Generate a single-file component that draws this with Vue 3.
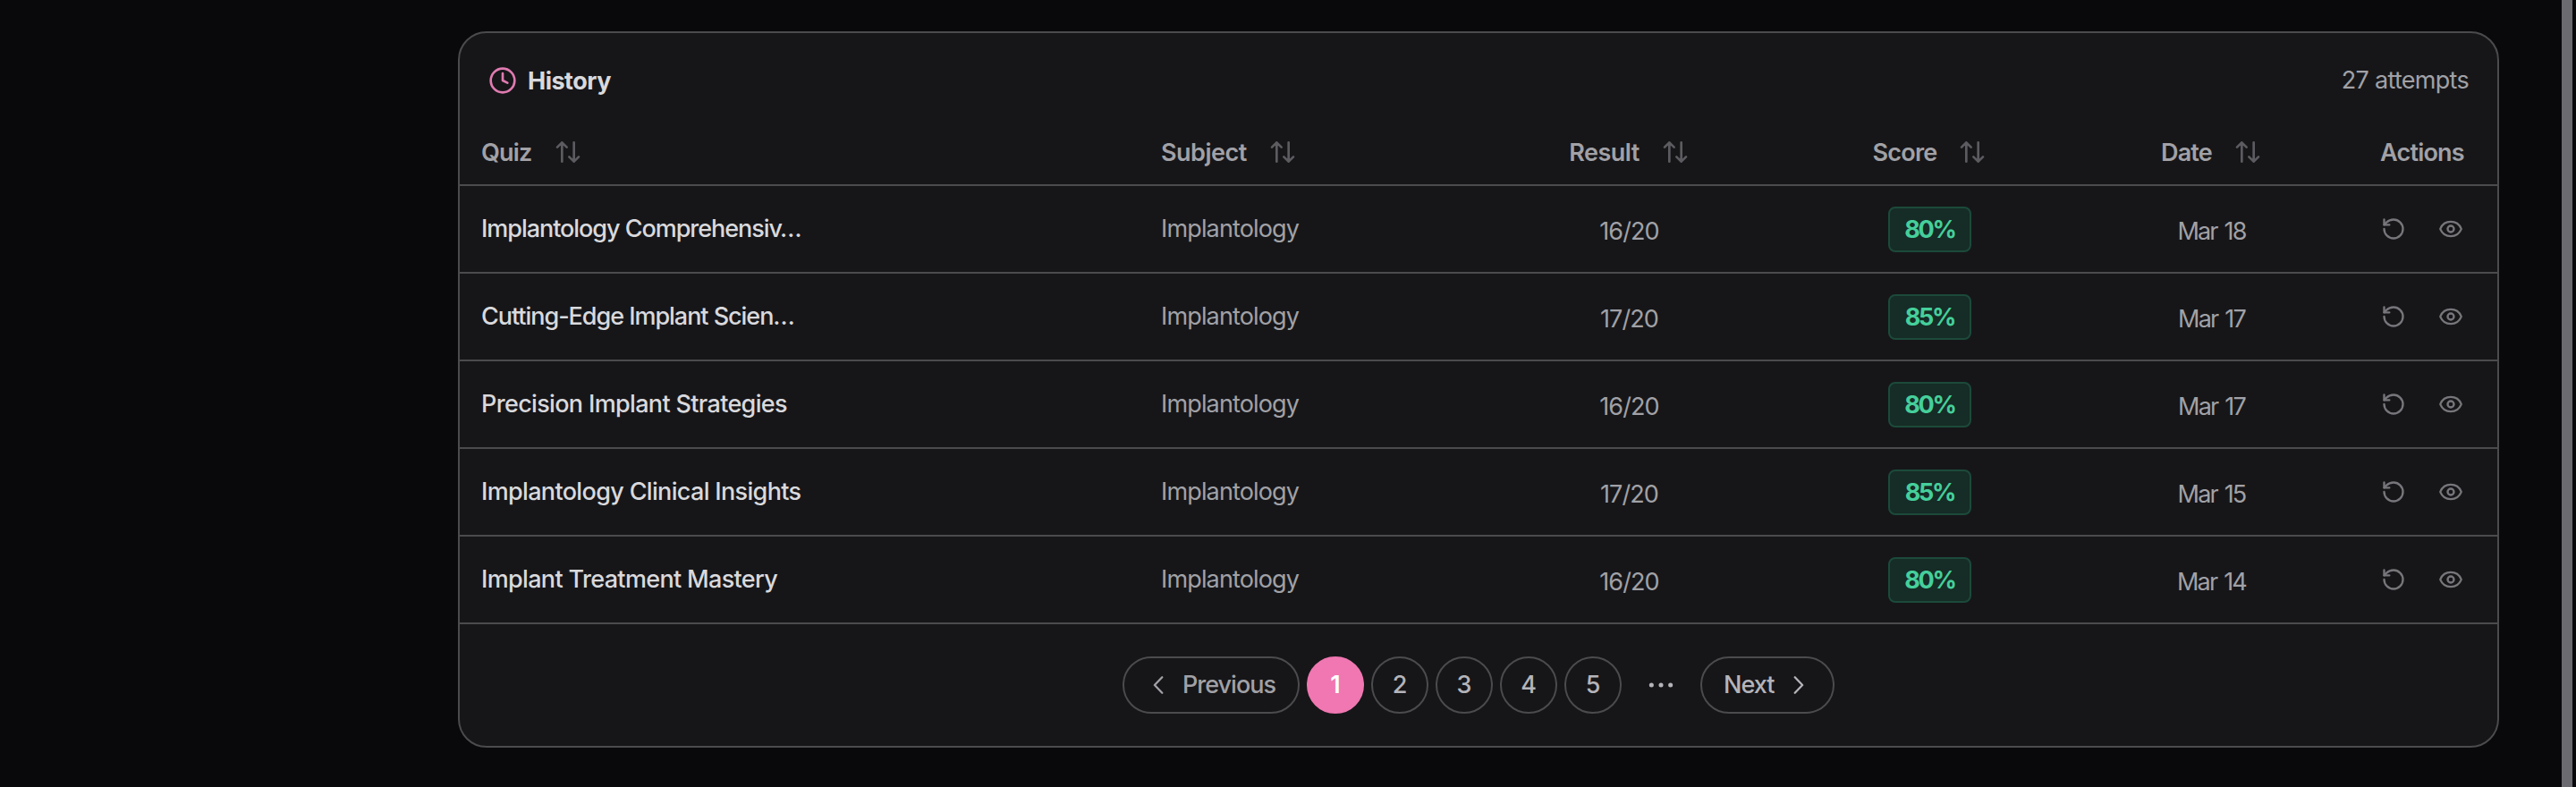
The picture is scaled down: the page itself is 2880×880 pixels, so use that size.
<template>
  <div class="page">
    <section class="card">
      <header class="card-header">
        <h2 class="title">
          <svg class="icon title-icon" viewBox="0 0 24 24">
            <circle cx="12" cy="12" r="10" />
            <path d="M12 6v6l4 2" />
          </svg>
          <span class="title-text">History</span>
        </h2>
        <span class="count">27 attempts</span>
      </header>

      <div class="row head">
        <div
          v-for="c in columns"
          :key="c.id"
          class="cell"
          :class="{ center: c.center }"
        >
          <span class="label" :class="c.id">{{ c.label }}</span>
          <svg v-if="c.sortable" class="icon sort-icon" viewBox="0 0 24 24">
            <path d="m3 8 4-4 4 4M7 4v16M21 16l-4 4-4-4M17 20V4" />
          </svg>
        </div>
      </div>

      <div v-for="(a, i) in attempts" :key="i" class="row">
        <div class="cell">
          <span class="name" :class="{ truncated: a.quiz.endsWith('…') }">{{ a.quiz }}</span>
        </div>
        <div class="cell"><span class="subject-name">{{ a.subject }}</span></div>
        <div class="cell center low"><span class="result-value">{{ a.result }}</span></div>
        <div class="cell center"><span class="badge">{{ a.score }}%</span></div>
        <div class="cell center low"><span class="date-value">{{ a.date }}</span></div>
        <div class="cell center actions">
          <button class="action">
            <svg class="icon" viewBox="0 0 24 24">
              <path d="M3 12a9 9 0 1 0 9-9 9.75 9.75 0 0 0-6.74 2.74L3 8" />
              <path d="M3 3v5h5" />
            </svg>
          </button>
          <button class="action">
            <svg class="icon" viewBox="0 0 24 24">
              <path d="M2.062 12.348a1 1 0 0 1 0-.696 10.75 10.75 0 0 1 19.876 0 1 1 0 0 1 0 .696 10.75 10.75 0 0 1-19.876 0" />
              <circle cx="12" cy="12" r="3" />
            </svg>
          </button>
        </div>
      </div>

      <nav class="pagination">
        <button class="page-btn prev">
          <svg class="icon chevron" viewBox="0 0 24 24"><path d="m15.2 18.6-6.3-6.6 6.3-6.6" /></svg>
          <span>Previous</span>
        </button>
        <button
          v-for="p in pages"
          :key="p"
          class="page-btn number"
          :class="{ active: p === current }"
          @click="current = p"
        >
          {{ p }}
        </button>
        <span class="ellipsis">
          <svg viewBox="0 0 24 24">
            <circle cx="4" cy="12" r="1.9" />
            <circle cx="12" cy="12" r="1.9" />
            <circle cx="20" cy="12" r="1.9" />
          </svg>
        </span>
        <button class="page-btn next">
          <span>Next</span>
          <svg class="icon chevron" viewBox="0 0 24 24"><path d="m8.8 18.6 6.3-6.6-6.3-6.6" /></svg>
        </button>
      </nav>
    </section>

    <div class="scrollbar"></div>
  </div>
</template>

<script setup>
import { ref } from 'vue'

const columns = [
  { id: 'quiz', label: 'Quiz', sortable: true },
  { id: 'subject', label: 'Subject', sortable: true },
  { id: 'result', label: 'Result', sortable: true, center: true },
  { id: 'score', label: 'Score', sortable: true, center: true },
  { id: 'date', label: 'Date', sortable: true, center: true },
  { id: 'actions-label', label: 'Actions', center: true },
]

const attempts = [
  { quiz: 'Implantology Comprehensiv…', subject: 'Implantology', result: '16/20', score: 80, date: 'Mar 18' },
  { quiz: 'Cutting-Edge Implant Scien…', subject: 'Implantology', result: '17/20', score: 85, date: 'Mar 17' },
  { quiz: 'Precision Implant Strategies', subject: 'Implantology', result: '16/20', score: 80, date: 'Mar 17' },
  { quiz: 'Implantology Clinical Insights', subject: 'Implantology', result: '17/20', score: 85, date: 'Mar 15' },
  { quiz: 'Implant Treatment Mastery', subject: 'Implantology', result: '16/20', score: 80, date: 'Mar 14' },
]

const pages = [1, 2, 3, 4, 5]
const current = ref(1)
</script>

<style>
body {
  background: #09090b;
}
</style>

<style scoped>
.page {
  display: flex;
  align-items: flex-start;
  box-sizing: border-box;
  height: 880px;
  padding: 0 4px 0 512px;
  overflow: hidden;
  background: #09090b;
  color: #a1a1a6;
  font-family: Inter, sans-serif;
  font-size: 27px;
  line-height: 40px;
}

.card {
  box-sizing: border-box;
  width: 2282px;
  height: 801px;
  margin-top: 35px;
  border: 2px solid #4b4b4e;
  border-radius: 32px;
  background: #161619;
}

.scrollbar {
  width: 12px;
  height: 880px;
  margin-left: auto;
  background: #6b6a70;
}

.icon {
  display: block;
  flex: none;
  width: 32px;
  height: 32px;
  fill: none;
  stroke: currentColor;
  stroke-width: 2;
  stroke-linecap: round;
  stroke-linejoin: round;
}

.card-header {
  display: flex;
  align-items: center;
  justify-content: space-between;
  height: 106px;
  padding: 0 32px;
}

.title {
  display: flex;
  align-items: center;
  gap: 12px;
  margin: 0;
  color: #d9d9dc;
  font-size: 27px;
  font-weight: 700;
  letter-spacing: -0.5px;
}

.title-icon {
  color: #e07bb0;
}

.title-text {
  padding-top: 2px;
}

.count {
  letter-spacing: -0.7px;
}

.row {
  display: grid;
  grid-template-columns: 760px 375px 345px 327px 303px 168px;
  box-sizing: border-box;
  height: 98px;
  border-bottom: 2px solid #4b4b4e;
}

.head {
  height: 65px;
  padding-bottom: 9px;
  font-weight: 600;
}

.cell {
  display: flex;
  align-items: center;
  padding: 0 24px;
  white-space: nowrap;
}

.cell.center {
  justify-content: center;
}

.label {
  padding-top: 2px;
  letter-spacing: -0.8px;
}

.label.subject,
.label.result {
  letter-spacing: -0.5px;
}

.sort-icon {
  margin-left: 24px;
  color: #5c5c60;
}

.name {
  color: #d9d9dc;
  font-weight: 500;
  letter-spacing: -0.66px;
}

.name.truncated {
  letter-spacing: -1.04px;
}

.subject-name {
  letter-spacing: -0.85px;
}

.low {
  padding-top: 6px;
}

.result-value {
  letter-spacing: -0.9px;
}

.date-value {
  letter-spacing: -1.8px;
  word-spacing: 2px;
}

.badge {
  display: flex;
  align-items: center;
  justify-content: center;
  box-sizing: border-box;
  width: 93px;
  height: 51px;
  padding-top: 2px;
  border: 2px solid #1c4a3a;
  border-radius: 8px;
  background: #162c26;
  color: #45cf9b;
  font-weight: 700;
  letter-spacing: -2.2px;
}

button {
  font: inherit;
  cursor: pointer;
}

.cell.actions {
  padding: 0;
}

.action {
  display: flex;
  align-items: center;
  justify-content: center;
  width: 64px;
  height: 64px;
  padding: 0;
  border: 0;
  background: none;
  color: #77777b;
}

.action .icon {
  width: 28px;
  height: 28px;
}

.pagination {
  display: flex;
  justify-content: center;
  gap: 8px;
  padding-top: 36px;
}

.page-btn {
  display: flex;
  align-items: center;
  box-sizing: border-box;
  height: 64px;
  padding: 0 22px;
  border: 2px solid #4b4b4e;
  border-radius: 32px;
  background: none;
  color: #b4b4b9;
  font-weight: 500;
  letter-spacing: -1px;
}

.prev {
  gap: 11px;
  width: 198px;
  color: #a1a1a6;
}

.next {
  justify-content: space-between;
  width: 150px;
  padding-left: 24px;
}

.chevron {
  stroke-width: 1.7;
}

.number {
  justify-content: center;
  width: 64px;
  padding: 0;
  letter-spacing: 0;
}

.number.active {
  border-color: #f077b1;
  background: #f077b1;
  color: #fff;
  font-weight: 600;
}

.ellipsis {
  display: flex;
  align-items: center;
  justify-content: center;
  width: 72px;
}

.ellipsis svg {
  width: 32px;
  height: 32px;
  fill: #b4b4b9;
}
</style>
